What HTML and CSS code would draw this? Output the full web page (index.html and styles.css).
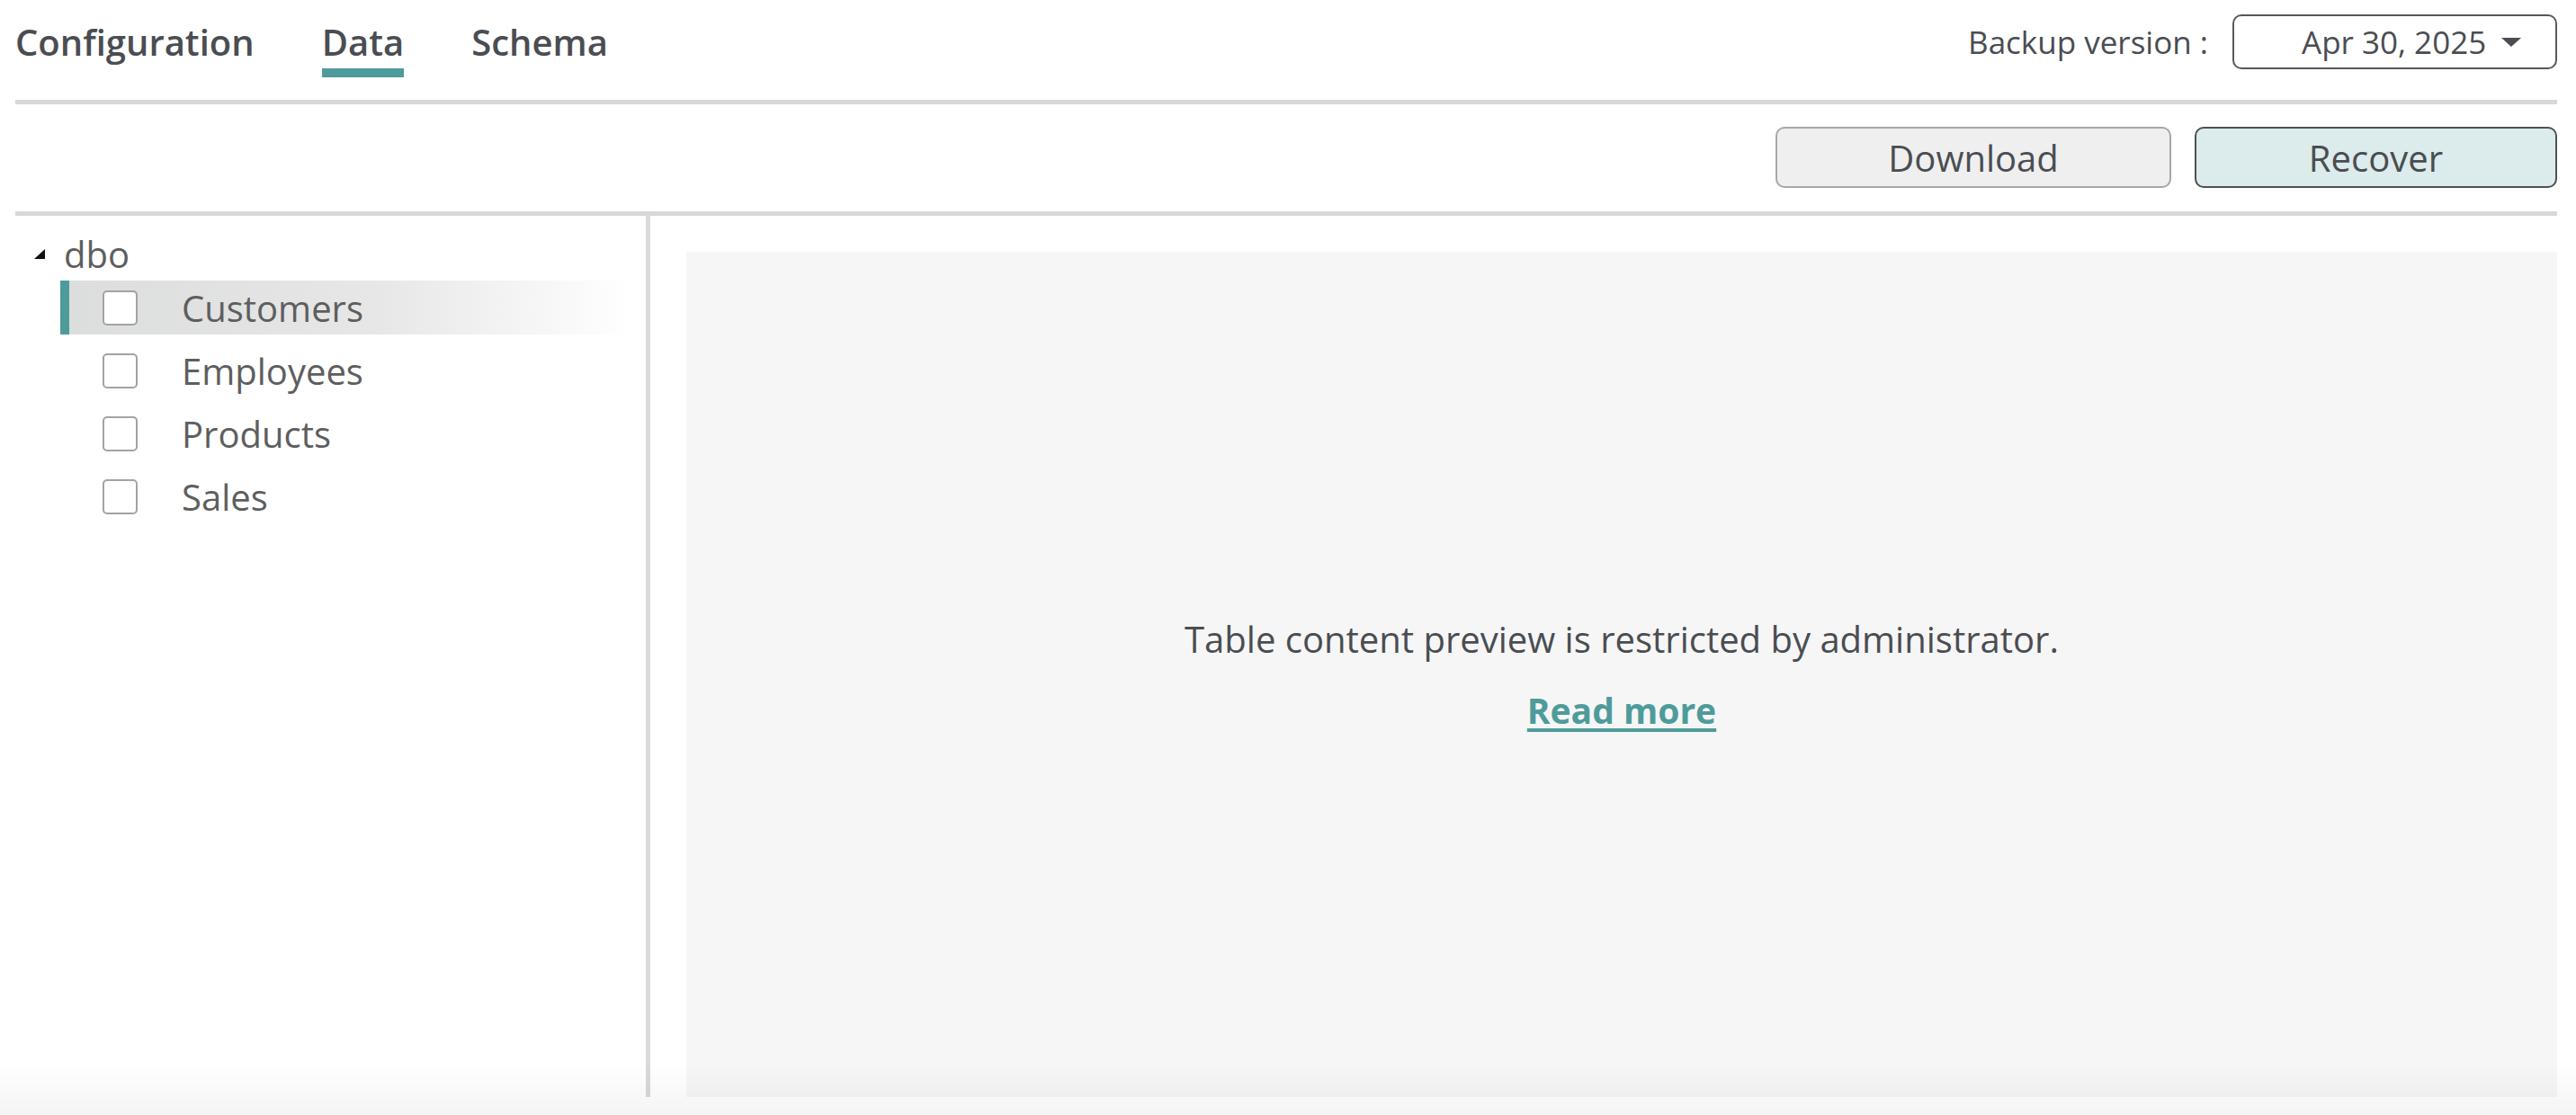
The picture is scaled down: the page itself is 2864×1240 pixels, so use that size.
FILE: index.html
```html
<!DOCTYPE html>
<html lang="en">
<head>
    <meta charset="UTF-8">
    <meta name="viewport" content="width=device-width, initial-scale=1.0">
    <title>Backup Data</title>
    <link rel="stylesheet" href="styles.css">
</head>
<body>
    <div class="page">
        <div class="header">
            <div class="tabs">
                <span class="tab">Configuration</span>
                <span class="tab active">Data</span>
                <span class="tab">Schema</span>
            </div>
            <div class="backup">
                <span class="backup-label">Backup version :</span>
                <div class="dropdown">
                    <span>Apr 30, 2025</span>
                    <svg class="caret" width="22" height="10" viewBox="0 0 22 10"><polygon points="0,0 22,0 11,10" fill="#4a4d52"/></svg>
                </div>
            </div>
        </div>

        <div class="toolbar">
            <button class="btn btn-download">Download</button>
            <button class="btn btn-recover">Recover</button>
        </div>

        <div class="main">
            <div class="tree">
                <div class="tree-root">
                    <svg class="toggle" width="12" height="11" viewBox="0 0 12 11"><polygon points="12,0 12,11 0,11" fill="#111"/></svg>
                    <span>dbo</span>
                </div>
                <div class="tree-item selected"><span class="check"></span><span>Customers</span></div>
                <div class="tree-item"><span class="check"></span><span>Employees</span></div>
                <div class="tree-item"><span class="check"></span><span>Products</span></div>
                <div class="tree-item"><span class="check"></span><span>Sales</span></div>
            </div>
            <div class="preview">
                <div class="preview-box">
                    <p class="notice">Table content preview is restricted by administrator.</p>
                    <a class="read-more" href="#">Read more</a>
                </div>
            </div>
        </div>
    </div>
    <div class="bottom-fade"></div>
</body>
</html>
```

FILE: styles.css
```css
* {
    margin: 0;
    padding: 0;
    box-sizing: border-box;
    font-family: "Open Sans", "Noto Sans", sans-serif;
}

body {
    background: #fff;
    color: #4a4d52;
}

.page {
    height: 100vh;
    display: flex;
    flex-direction: column;
    padding: 0 21px 20px 17px;
}

.header {
    display: flex;
    justify-content: space-between;
    align-items: flex-start;
    height: 116px;
    border-bottom: 5px solid #d8d8d8;
}

.tabs {
    display: flex;
    gap: 75px;
    padding-top: 19px;
}

.tab {
    font-size: 40px;
    font-weight: 600;
    line-height: 55px;
    color: #4a4d52;
}

.tab.active::after {
    content: "";
    display: block;
    height: 10px;
    margin-top: 2px;
    background: #4e9b9b;
}

.backup {
    display: flex;
    align-items: center;
    gap: 27px;
    margin-top: 16px;
}

.backup-label {
    font-size: 35px;
}

.dropdown {
    width: 361px;
    height: 61px;
    border: 2px solid #55595d;
    border-radius: 10px;
    display: flex;
    align-items: center;
    gap: 17px;
    padding-left: 75px;
    font-size: 35px;
}

.toolbar {
    display: flex;
    justify-content: flex-end;
    gap: 26px;
    padding: 25px 0 26px;
    border-bottom: 5px solid #d8d8d8;
}

.btn {
    height: 68px;
    padding: 0 125px;
    border-radius: 10px;
    font-size: 40px;
    color: #4a4d52;
    cursor: pointer;
}

.btn-download {
    padding: 0 123px;
    background: #efefef;
    border: 2px solid #a7a7a7;
}

.btn-recover {
    background: #dcebeb;
    border: 2px solid #4c5155;
}

.main {
    flex: 1;
    display: flex;
    min-height: 0;
}

.tree {
    width: 706px;
    border-right: 5px solid #d9d9d9;
    padding-top: 16px;
    color: #5e5e5e;
    font-size: 40px;
}

.tree-root {
    display: flex;
    align-items: center;
    gap: 21px;
    height: 52px;
    padding-left: 21px;
    margin-bottom: 4px;
}

.tree-item {
    display: flex;
    align-items: center;
    height: 60px;
    margin: 0 15px 10px 50px;
    padding-left: 37px;
    gap: 49px;
    border-left: 10px solid transparent;
}

.tree-item.selected {
    border-left-color: #4e9b9b;
    background: linear-gradient(to right, #dcdddd, #e7e7e7 55%, #fff 100%);
}

.check {
    width: 39px;
    height: 39px;
    border: 2px solid #a3a3a3;
    border-radius: 5px;
    background: #fff;
}

.preview {
    flex: 1;
    display: flex;
    padding: 40px 0 0 40px;
}

.preview-box {
    flex: 1;
    background: #f6f6f6;
    display: flex;
    flex-direction: column;
    align-items: center;
    justify-content: center;
    gap: 25px;
}

.notice {
    font-size: 40px;
    line-height: 54px;
}

.read-more {
    font-size: 39px;
    font-weight: 700;
    line-height: 54px;
    color: #4e9b9b;
    text-decoration: underline;
    text-decoration-thickness: 4px;
    text-underline-offset: 5px;
}

.bottom-fade {
    position: fixed;
    left: 0;
    right: 0;
    bottom: 0;
    height: 60px;
    background: linear-gradient(to bottom, rgba(0, 0, 0, 0), rgba(0, 0, 0, 0.045));
    pointer-events: none;
}
```
